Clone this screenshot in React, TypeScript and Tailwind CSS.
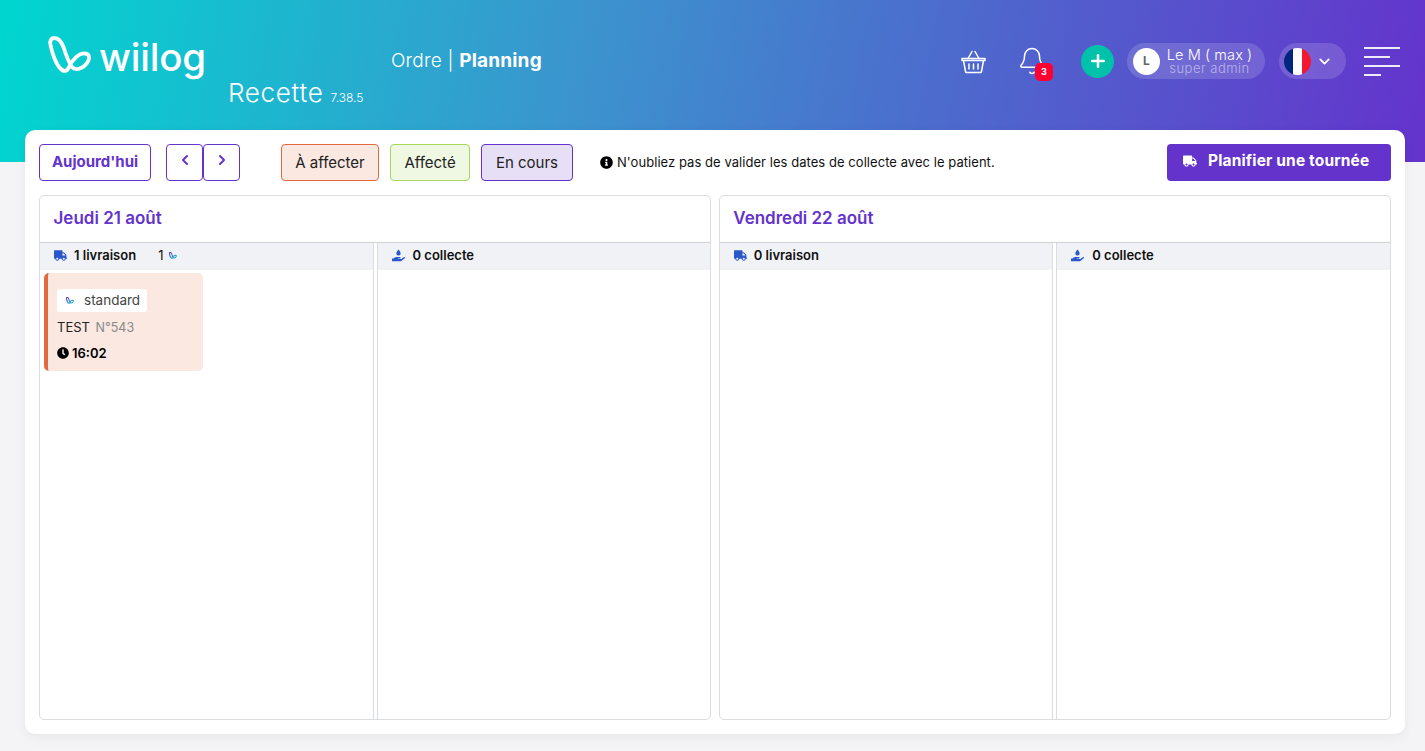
import { Bell, ChevronDown, ChevronLeft, ChevronRight, Plus } from "lucide-react";
import { FaClock, FaHandHoldingWater, FaInfoCircle, FaTruck } from "react-icons/fa";

const LOGO_PATH =
  "M6.5 2C3 2 1.500 5 2.500 9C4 17 8 28 12 32C15 36 19 36 21 31C24 24 31 17 37 17.500C42 18 42 23 39 27C35 33 27 35 24 31C21 27 18 19 15.500 11C13 5 10 2 6.500 2Z";

const LogoMark = ({ className }: { className: string }) => (
  <svg viewBox="0 0 45 38" fill="none" className={className}>
    <path d={LOGO_PATH} stroke="white" strokeWidth="3.8" strokeLinejoin="round" />
  </svg>
);

const SmallMark = () => (
  <svg viewBox="0 0 45 38" fill="none" className="h-[7px] w-[8px]">
    <defs>
      <linearGradient id="mark" x1="0" y1="0" x2="1" y2="1">
        <stop offset="0" stopColor="#6433cc" />
        <stop offset="1" stopColor="#00c9c9" />
      </linearGradient>
    </defs>
    <path d={LOGO_PATH} stroke="url(#mark)" strokeWidth="6" strokeLinejoin="round" />
  </svg>
);

const Basket = () => (
  <svg viewBox="0 0 25 25" fill="none" stroke="white" strokeWidth="1.5" className="h-[25px] w-[25px]">
    <path d="M7 9.5 11 2.5M18 9.5 14 2.5" strokeLinecap="round" />
    <path d="M1 9.5H24V11.5H1ZM2.5 11.5 4.5 22.5C4.6 23 5 23.5 5.5 23.5H19.5C20 23.5 20.4 23 20.5 22.5L22.500 11.5" strokeLinejoin="round" />
    <path d="M8 15V20M12.500 15V20M17 15V20" strokeLinecap="round" />
  </svg>
);

const MenuLines = () => (
  <div className="flex w-[36px] flex-col items-start">
    <span className="h-[2px] w-[36px] bg-white/90" />
    <span className="mt-[7px] h-[2px] w-[26px] bg-white/90" />
    <span className="mt-[7px] h-[2px] w-[36px] bg-white/90" />
    <span className="mt-[7px] h-[2px] w-[17px] bg-white/90" />
  </div>
);

const Header = () => (
  <header className="flex h-[162px] items-start bg-[linear-gradient(100deg,#00d6d0_0%,#3b95ce_40%,#6433cc_100%)] text-white">
    <div className="ml-[48px] mt-[36px] w-[343px] shrink-0">
      <div className="flex h-[44px] items-start">
        <LogoMark className="h-[38px] w-[45px]" />
        <span className="ml-[6px] mt-[-3px] text-[38.500px] font-medium leading-[48px] tracking-[-0.2px]">wiilog</span>
      </div>
      <div className="ml-[180px] mt-[-1px] flex items-baseline">
        <span className="text-[26px] font-light leading-[28px] tracking-[0.7px]">Recette</span>
        <span className="ml-[7px] text-[12px] font-light">7.38.5</span>
      </div>
    </div>
    <div className="mt-[49px] text-[19px] leading-[24px] tracking-[0.2px]">
      <span className="font-light">Ordre | </span>
      <span className="font-bold">Planning</span>
    </div>
    <div className="ml-auto mr-[25px] mt-[43px] flex items-center">
      <Basket />
      <div className="relative ml-[32px] h-[36px] w-[35px]">
        <Bell className="ml-[-1px] mt-[3px] h-[30px] w-[30px]" strokeWidth={1.2} />
        <span className="absolute left-[17px] top-[20px] flex h-[18px] w-[18px] items-center justify-center rounded-[5px] bg-[#ff0033] text-[9px] font-bold">
          3
        </span>
      </div>
      <span className="ml-[28px] flex h-[33px] w-[33px] items-center justify-center rounded-full bg-[#00c2ab]">
        <Plus className="h-[20px] w-[20px]" strokeWidth={3} />
      </span>
      <div className="ml-[13px] flex h-[36px] w-[138px] items-center rounded-full bg-white/15 pl-[6px]">
        <span className="flex h-[27px] w-[27px] items-center justify-center rounded-full bg-white text-[12px] font-bold text-[#666]">L</span>
        <div className="ml-[4px] w-[91px] text-center">
          <div className="text-[14.500px] font-light leading-[15px] tracking-[0.1px]">Le M ( max )</div>
          <div className="text-[13px] font-light leading-[13px] tracking-[0.5px] text-white/50">super admin</div>
        </div>
      </div>
      <div className="ml-[14px] flex h-[36px] w-[67px] items-center rounded-full bg-white/15 pl-[5px]">
        <div className="flex h-[27px] w-[27px] overflow-hidden rounded-full">
          <span className="w-[9px] bg-[#00267f]" />
          <span className="w-[9px] bg-white" />
          <span className="w-[9px] bg-[#f31830]" />
        </div>
        <ChevronDown className="ml-[5px] h-[17px] w-[17px]" strokeWidth={2.5} />
      </div>
      <div className="ml-[18px]">
        <MenuLines />
      </div>
    </div>
  </header>
);

const Toolbar = () => (
  <div className="flex h-[37px] items-center text-[15px] text-[#222]">
    <button className="h-[37px] w-[112px] rounded-[4px] border border-[#6433cc] text-[15px] font-bold text-[#6433cc]">Aujourd'hui</button>
    <button className="ml-[15px] flex h-[37px] w-[37px] items-center justify-center rounded-[4px] border border-[#6433cc] pb-[5px] text-[#6433cc]">
      <ChevronLeft className="h-[16px] w-[16px]" strokeWidth={3} />
    </button>
    <button className="flex h-[37px] w-[37px] items-center justify-center rounded-[4px] border border-[#6433cc] pb-[5px] text-[#6433cc]">
      <ChevronRight className="h-[16px] w-[16px]" strokeWidth={3} />
    </button>
    <span className="ml-[41px] flex h-[37px] w-[98px] items-center justify-center rounded-[4px] border border-[#e2693f] bg-[#fae8e1] pt-[2px]">À affecter</span>
    <span className="ml-[11px] flex h-[37px] w-[80px] items-center justify-center rounded-[4px] border border-[#a5d957] bg-[#eff8e2] pt-[2px]">Affecté</span>
    <span className="ml-[11px] flex h-[37px] w-[92px] items-center justify-center rounded-[4px] border border-[#6433cc] bg-[#e6dff6] pt-[2px]">En cours</span>
    <div className="ml-[27px] flex items-center text-[13px] tracking-[0.05px] text-[#111]">
      <FaInfoCircle className="mr-[4px] h-[13px] w-[13px] text-black" />
      N'oubliez pas de valider les dates de collecte avec le patient.
    </div>
    <button className="ml-auto flex h-[37px] w-[224px] items-center rounded-[4px] bg-[#6433cc] pl-[16px] pb-[3px] text-[15.500px] font-bold tracking-[0.15px] text-white">
      <FaTruck className="mr-[11px] h-[14px] w-[14px]" />
      Planifier une tournée
    </button>
  </div>
);

const ColumnHead = ({ kind, label, extra }: { kind: "truck" | "hand"; label: string; extra?: boolean }) => (
  <div className="flex h-[27px] items-center bg-[#f0f2f6] pb-[2px] pl-[14px] text-[13px] font-semibold text-[#111]">
    {kind === "truck" ? (
      <FaTruck className="mr-[7px] h-[13px] w-[13px] text-[#2a57c9]" />
    ) : (
      <FaHandHoldingWater className="mr-[8px] h-[13px] w-[13px] text-[#2a57c9]" />
    )}
    {label}
    {extra && (
      <span className="ml-[22px] flex items-center font-normal">
        1
        <span className="ml-[6px] flex">
          <SmallMark />
        </span>
      </span>
    )}
  </div>
);

const EventCard = () => (
  <div className="ml-[4px] mt-[3px] h-[98px] w-[159px] rounded-[5px] border-l-4 border-[#e2693f] bg-[#fae8e1] pl-[9px] pt-[16px]">
    <div className="flex h-[23px] w-[90px] items-center rounded-[3px] bg-white pl-[9px] text-[13.500px] text-[#444]">
      <SmallMark />
      <span className="ml-[10px]">standard</span>
    </div>
    <div className="mt-[7px] text-[13px] leading-[16px] text-[#222]">
      TEST <span className="ml-[2px] text-[12.500px] text-[#888]">N°543</span>
    </div>
    <div className="mt-[9px] flex items-center text-[13px] font-semibold leading-[16px] text-black">
      <FaClock className="mr-[3px] h-[12px] w-[12px]" />
      16:02
    </div>
  </div>
);

const DayPanel = ({ title, delivery, card }: { title: string; delivery: string; card?: boolean }) => (
  <section className="flex h-[525px] min-w-0 flex-1 flex-col rounded-[5px] border border-[#dcdde0] bg-white">
    <h2 className="flex h-[47px] shrink-0 items-center border-b border-[#cfd1d6] pb-[1px] pl-[13.500px] text-[17px] font-semibold text-[#6433cc]">{title}</h2>
    <div className="flex min-h-0 flex-1">
      <div className="w-[333.500px] border-r border-[#dcdde0]">
        <ColumnHead kind="truck" label={delivery} extra={card} />
        {card && <EventCard />}
      </div>
      <div className="ml-[3px] flex-1 border-l border-[#dcdde0]">
        <ColumnHead kind="hand" label="0 collecte" />
      </div>
    </div>
  </section>
);

export default function App() {
  return (
    <div className="h-[751px] overflow-hidden bg-[#f4f4f7] font-['Inter',sans-serif]">
      <Header />
      <main className="relative ml-[25px] mr-[20px] mt-[-32px] flex h-[604px] flex-col gap-[14px] rounded-[10px] bg-white p-[14px] shadow-[0_4px_12px_rgba(0,0,0,0.05)]">
        <Toolbar />
        <div className="flex gap-[7.500px]">
          <DayPanel title="Jeudi 21 août" delivery="1 livraison" card />
          <DayPanel title="Vendredi 22 août" delivery="0 livraison" />
        </div>
      </main>
    </div>
  );
}
